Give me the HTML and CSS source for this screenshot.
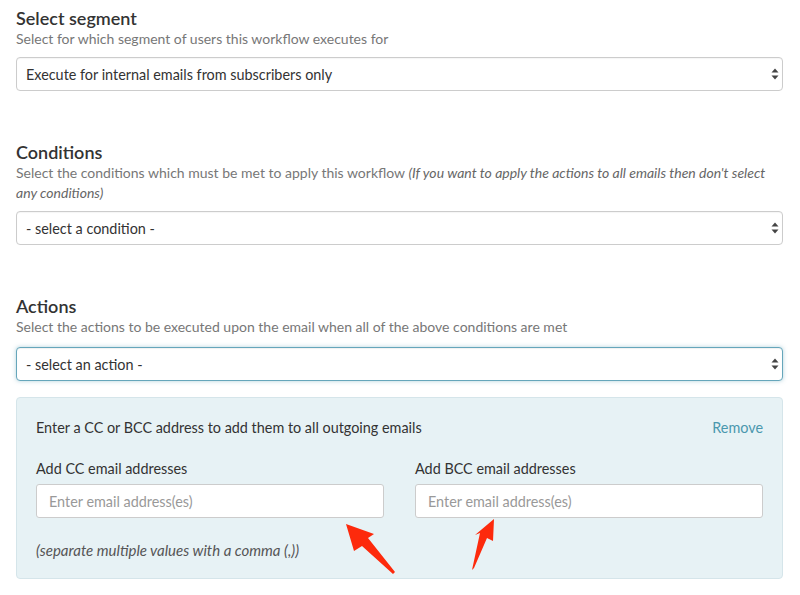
FILE: index.html
```html
<!DOCTYPE html>
<html lang="en">
<head>
    <meta charset="UTF-8">
    <meta name="viewport" content="width=device-width, initial-scale=1.0">
    <link rel="stylesheet" href="styles.css">
    <title>Workflow</title>
</head>
<body>
    <div class="page">
        <div class="section">
            <h2 class="title">Select segment</h2>
            <p class="desc">Select for which segment of users this workflow executes for</p>
            <div class="select-wrap">
                <select class="select">
                    <option>Execute for internal emails from subscribers only</option>
                </select>
                <svg class="carets" width="8" height="12" viewBox="0 0 8 12"><path d="M4 0.5 L7.5 4.5 L0.5 4.5 Z M4 11.5 L7.5 7.5 L0.5 7.5 Z" fill="#444"/></svg>
            </div>
        </div>

        <div class="section">
            <h2 class="title">Conditions</h2>
            <p class="desc">Select the conditions which must be met to apply this workflow <em>(If you want to apply the actions to all emails then don't select any conditions)</em></p>
            <div class="select-wrap">
                <select class="select">
                    <option>- select a condition -</option>
                </select>
                <svg class="carets" width="8" height="12" viewBox="0 0 8 12"><path d="M4 0.5 L7.5 4.5 L0.5 4.5 Z M4 11.5 L7.5 7.5 L0.5 7.5 Z" fill="#444"/></svg>
            </div>
        </div>

        <div class="section last">
            <h2 class="title">Actions</h2>
            <p class="desc">Select the actions to be executed upon the email when all of the above conditions are met</p>
            <div class="select-wrap">
                <select class="select focused">
                    <option>- select an action -</option>
                </select>
                <svg class="carets" width="8" height="12" viewBox="0 0 8 12"><path d="M4 0.5 L7.5 4.5 L0.5 4.5 Z M4 11.5 L7.5 7.5 L0.5 7.5 Z" fill="#444"/></svg>
            </div>
        </div>

        <div class="panel">
            <div class="panel-head">
                <span>Enter a CC or BCC address to add them to all outgoing emails</span>
                <a class="remove" href="#">Remove</a>
            </div>
            <div class="fields">
                <div class="field">
                    <label for="cc">Add CC email addresses</label>
                    <input type="text" id="cc" placeholder="Enter email address(es)">
                </div>
                <div class="field">
                    <label for="bcc">Add BCC email addresses</label>
                    <input type="text" id="bcc" placeholder="Enter email address(es)">
                </div>
            </div>
            <p class="note">(separate multiple values with a comma (,))</p>
        </div>
    </div>

    <!-- annotation arrows drawn over the screenshot -->
    <svg class="arrows" width="800" height="595" viewBox="0 0 800 595">
        <polygon points="346,524 374,534 368,538 395,572 393,574 362,546 354,551" fill="#fd2a0c"/>
        <polygon points="494,519 493,541 487,538 474,568 472,570 480,533 475,535" fill="#fd2a0c"/>
    </svg>
</body>
</html>
```

FILE: styles.css
```css
body {
    margin: 0;
    font-family: Lato, "Open Sans", sans-serif;
    color: #333;
    background: #fff;
}

.page {
    padding: 8px 17px 0 16px;
}

.section {
    margin-bottom: 51px;
}

.section.last {
    margin-bottom: 16px;
}

.title {
    margin: 0;
    font-size: 18px;
    line-height: 21px;
    font-weight: 600;
    color: #333;
}

.desc {
    margin: 0 0 8px;
    font-size: 14px;
    line-height: 20px;
    color: #777;
}

.last .desc {
    margin-bottom: 10px;
}

.desc em {
    color: #666;
}

.select-wrap {
    position: relative;
}

.select {
    display: block;
    width: 100%;
    height: 34px;
    padding: 0 9px;
    border: 1px solid #ccc;
    border-radius: 4px;
    background: #fff;
    font-family: Lato, sans-serif;
    font-size: 14.4px;
    color: #333;
    -webkit-appearance: none;
    appearance: none;
    box-shadow: inset 0 1px 1px rgba(0, 0, 0, 0.04);
}

.select.focused {
    border-color: #66a6bb;
    box-shadow: inset 0 1px 1px rgba(0, 0, 0, 0.06), 0 0 4px rgba(102, 166, 187, 0.5);
}

.carets {
    position: absolute;
    right: 4px;
    top: 11px;
}

.panel {
    background-color: #e7f2f5;
    border: 1px solid #d5e5ea;
    border-radius: 4px;
    padding: 20px 19px 18px;
    font-size: 14.4px;
}

.panel-head {
    display: flex;
    justify-content: space-between;
    line-height: 20px;
}

.remove {
    color: #4b98ae;
    text-decoration: none;
}

.fields {
    display: grid;
    grid-template-columns: 1fr 1fr;
    gap: 31px;
    margin-top: 21px;
}

.field label {
    display: block;
    line-height: 20px;
    color: #333;
}

.field input {
    display: block;
    box-sizing: border-box;
    width: 100%;
    height: 34px;
    margin-top: 5px;
    padding: 0 12px;
    border: 1px solid #ccc;
    border-radius: 3px;
    background: #fff;
    font-family: Lato, sans-serif;
    font-size: 14.4px;
    color: #333;
}

.field input::placeholder {
    color: #999;
}

.note {
    margin: 22px 0 0;
    font-size: 15px;
    line-height: 20px;
    font-style: italic;
    color: #555;
}

.arrows {
    position: absolute;
    left: 0;
    top: 0;
    pointer-events: none;
}
```
